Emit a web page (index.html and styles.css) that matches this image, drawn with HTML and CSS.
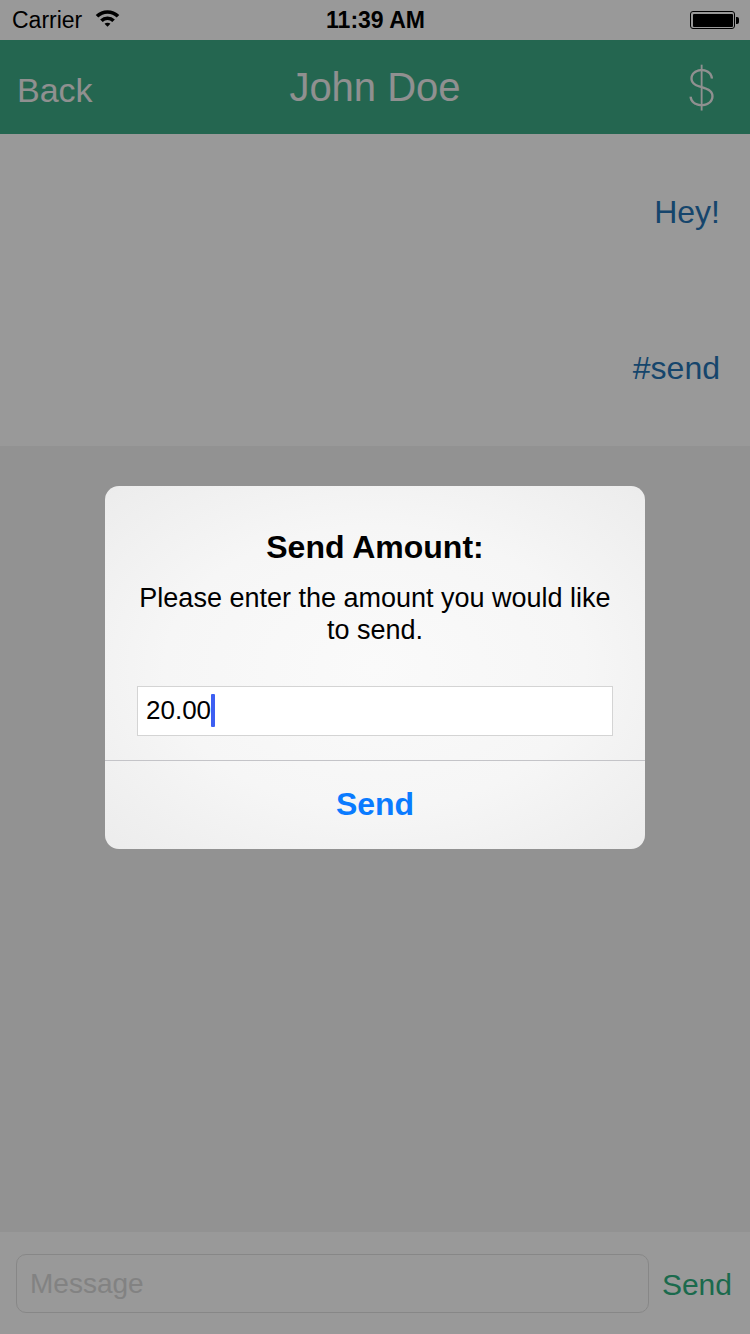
FILE: index.html
```html
<!DOCTYPE html>
<html lang="en">
<head>
<meta charset="utf-8">
<title>John Doe</title>
<link rel="stylesheet" href="styles.css">
</head>
<body>
<div class="screen">
  <div class="statusbar">
    <div class="status-left">
      <span class="carrier">Carrier</span>
      <svg class="wifi" viewBox="0 1 24 17" width="25" height="18" aria-hidden="true">
        <path d="M0.69 5.69 A16 16 0 0 1 23.31 5.69 L20.84 8.16 A12.5 12.5 0 0 0 3.16 8.16 Z"/>
        <path d="M4.93 9.93 A10 10 0 0 1 19.07 9.93 L16.6 12.4 A6.5 6.5 0 0 0 7.4 12.4 Z"/>
        <path d="M9.17 14.17 A4 4 0 0 1 14.83 14.17 L12 17 Z"/>
      </svg>
    </div>
    <div class="time">11:39 AM</div>
    <div class="status-right">
      <div class="battery"><div class="battery-fill"></div></div>
      <div class="battery-nub"></div>
    </div>
  </div>

  <div class="navbar">
    <div class="nav-back">Back</div>
    <div class="nav-title">John Doe</div>
    <div class="nav-action">$</div>
  </div>

  <div class="messages">
    <div class="message-row"><span class="message-text">Hey!</span></div>
    <div class="message-row"><span class="message-text">#send</span></div>
  </div>

  <div class="empty-area"></div>

  <div class="composer">
    <div class="composer-input">Message</div>
    <div class="composer-send">Send</div>
  </div>
</div>

<div class="overlay">
  <div class="alert">
    <div class="alert-body">
      <div class="alert-title">Send Amount:</div>
      <div class="alert-message">Please enter the amount you would like to send.</div>
      <div class="alert-field"><span class="field-value">20.00</span><span class="caret"></span></div>
    </div>
    <div class="alert-button">Send</div>
  </div>
</div>
</body>
</html>
```

FILE: styles.css
```css
* {
  box-sizing: border-box;
}

html, body {
  margin: 0;
  padding: 0;
}

body {
  width: 750px;
  height: 1334px;
  overflow: hidden;
  font-family: "Liberation Sans", Arial, sans-serif;
  background: #ffffff;
  position: relative;
}

.screen {
  display: flex;
  flex-direction: column;
  height: 1334px;
}

/* Status bar */
.statusbar {
  height: 40px;
  display: grid;
  grid-template-columns: 1fr auto 1fr;
  align-items: center;
  padding: 0 11px 0 12px;
  color: #000;
  background: #ffffff;
}

.status-left {
  display: flex;
  align-items: center;
  gap: 13px;
}

.carrier {
  font-size: 23px;
  line-height: 40px;
}

.wifi {
  fill: #000;
  display: block;
  margin-top: -2px;
}

.time {
  font-size: 23px;
  font-weight: 700;
  line-height: 40px;
}

.status-right {
  display: flex;
  align-items: center;
  justify-content: flex-end;
  gap: 1px;
}

.battery {
  width: 45px;
  height: 18px;
  border: 1.5px solid #000;
  border-radius: 3px;
  padding: 1.5px;
}

.battery-fill {
  width: 100%;
  height: 100%;
  background: #000;
  border-radius: 1px;
}

.battery-nub {
  width: 3px;
  height: 7px;
  background: #000;
  border-radius: 0 2px 2px 0;
}

/* Navigation bar */
.navbar {
  height: 94px;
  background: #3caa86;
  display: grid;
  grid-template-columns: 1fr auto 1fr;
  align-items: center;
  color: #f0f0f0;
}

.nav-back {
  font-size: 34px;
  padding-left: 17px;
  margin-top: 6px;
}

.nav-title {
  font-size: 40px;
}

.nav-action {
  justify-self: end;
  font-family: "Inter", "Liberation Sans", sans-serif;
  font-weight: 200;
  font-size: 50px;
  padding-right: 33px;
  margin-top: 2px;
}

/* Messages */
.messages {
  display: flex;
  flex-direction: column;
  background: #ffffff;
}

.message-row {
  height: 156px;
  display: flex;
  align-items: center;
  justify-content: flex-end;
  padding-right: 30px;
}

.message-text {
  font-size: 32px;
  color: #2674b4;
}

.empty-area {
  flex: 1;
  background: #f3f3f3;
}

/* Composer */
.composer {
  height: 102px;
  background: #ffffff;
  display: flex;
  align-items: center;
  padding: 0 18px 0 16px;
  gap: 13px;
}

.composer-input {
  flex: 1;
  height: 59px;
  border: 1.5px solid #e2e2e2;
  border-radius: 10px;
  display: flex;
  align-items: center;
  padding-left: 13px;
  padding-top: 2px;
  font-size: 28px;
  color: #d9d9d9;
}

.composer-send {
  font-size: 30px;
  color: #2db180;
  margin-top: 3px;
}

/* Alert overlay */
.overlay {
  position: absolute;
  inset: 0;
  background: rgba(0, 0, 0, 0.4);
  display: flex;
  align-items: center;
  justify-content: center;
}

.alert {
  width: 540px;
  border-radius: 14px;
  background: radial-gradient(ellipse at center, #fafafa 0%, #f6f6f6 55%, #ececec 100%);
  overflow: hidden;
  color: #000;
}

.alert-body {
  padding: 41px 32px 24px;
  display: flex;
  flex-direction: column;
  align-items: stretch;
  text-align: center;
  border-bottom: 1px solid #c4c4c8;
}

.alert-title {
  font-size: 32px;
  font-weight: 700;
  line-height: 40px;
}

.alert-message {
  font-size: 27px;
  line-height: 32px;
  margin-top: 15px;
}

.alert-field {
  margin-top: 40px;
  height: 50px;
  background: #ffffff;
  border: 1px solid #d4d4d4;
  display: flex;
  align-items: center;
  padding-left: 8px;
  text-align: left;
  font-size: 26px;
}

.caret {
  display: inline-block;
  width: 4px;
  height: 33px;
  background: #3d5ff2;
  border-radius: 1px;
}

.alert-button {
  height: 88px;
  display: flex;
  align-items: center;
  justify-content: center;
  font-size: 32px;
  font-weight: 700;
  color: #0a7bff;
}
```
